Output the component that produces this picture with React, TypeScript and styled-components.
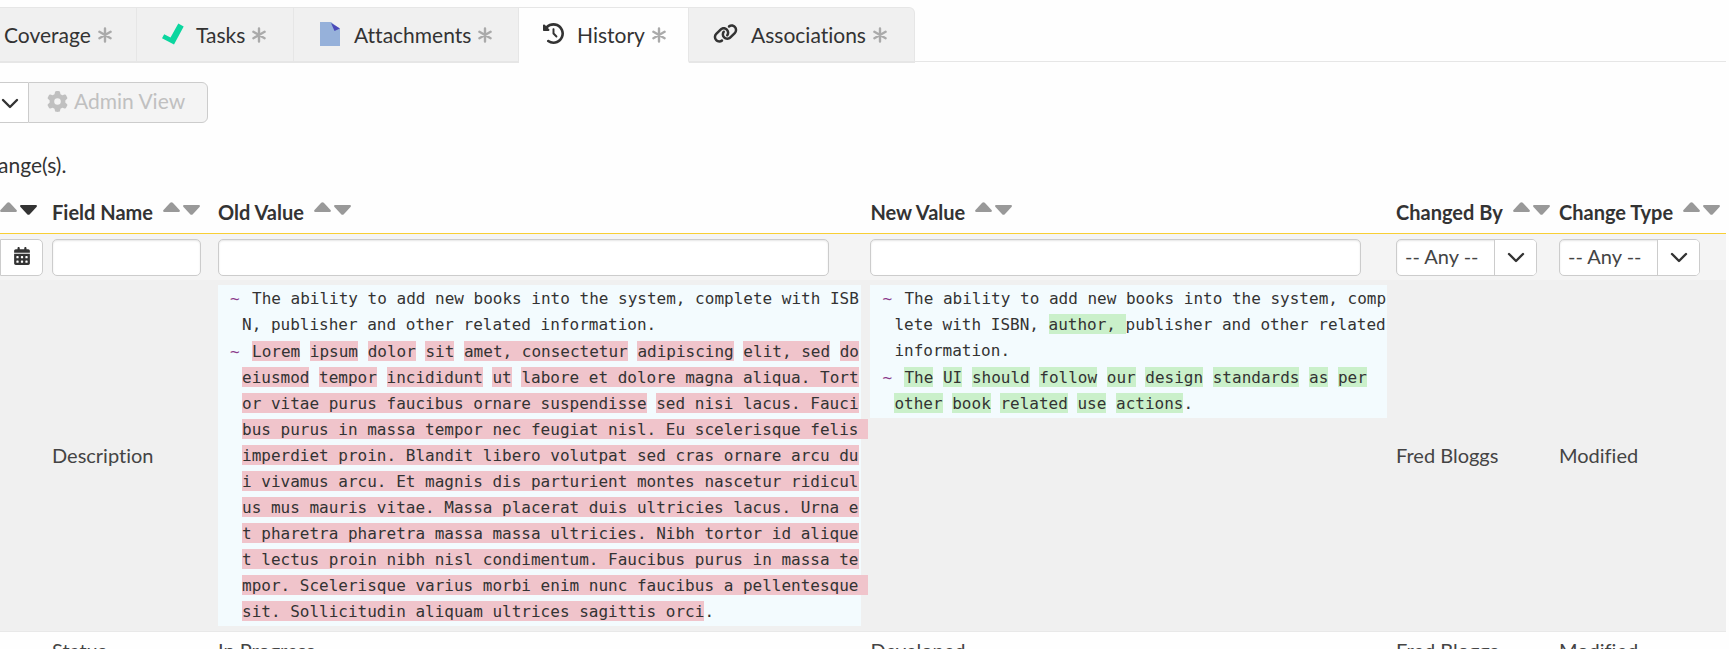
import React from "react";
import styled, { createGlobalStyle, css } from "styled-components";
import { FaCalendarDays, FaClockRotateLeft, FaGear, FaLink } from "react-icons/fa6";

const GlobalStyle = createGlobalStyle`
  *, *::before, *::after { box-sizing: border-box; }
  html { scrollbar-width: none; }
  body {
    margin: 0;
    background: #fefefe;
    color: #333;
    font-family: Lato, "Open Sans", sans-serif;
    font-size: 20px;
    font-variant-ligatures: none;
    line-height: 24px;
    overflow-x: hidden;
  }
`;

const Page = styled.main`
  padding: 7px 3px 0 0;
`;

const TabBar = styled.nav`
  display: flex;
  align-items: flex-start;
  height: 55px;
  border-bottom: 1px solid #e6e6e6;
`;

const Tab = styled.a<{ $active?: boolean; $width: number; $inset?: number }>`
  display: flex;
  flex: none;
  align-items: center;
  width: ${(p) => p.$width}px;
  height: 56px;
  padding-left: ${(p) => p.$inset ?? 24}px;
  border: 1px solid #e6e6e6;
  border-left-width: 0;
  border-bottom: 2px solid ${(p) => (p.$active ? "#fefefe" : "#e6e6e6")};
  background: ${(p) => (p.$active ? "#fefefe" : "#f0f0f0")};
  color: #333;
  font-size: 21px;
  text-decoration: none;
  white-space: nowrap;

  &:last-child { border-top-right-radius: 6px; }
`;

const TabIcon = styled.span<{ $width?: number }>`
  display: flex;
  flex: none;
  width: ${(p) => p.$width ?? 34}px;
  padding-bottom: 2px;
`;

const Star = styled.span`
  display: flex;
  margin-left: 7px;
  color: #aaa;
`;

const Toolbar = styled.div`
  display: flex;
  margin-top: 20px;
`;

const toolButton = css`
  display: flex;
  align-items: center;
  height: 41px;
  border: 1px solid #ccc;
  font: inherit;
  font-size: 21px;
`;

const ViewMenuButton = styled.button`
  ${toolButton}
  width: 28px;
  padding: 0;
  border-width: 1px 0;
  background: #fff;
  color: #333;
`;

const AdminButton = styled.button`
  ${toolButton}
  gap: 6px;
  width: 180px;
  padding: 0 0 3px 18px;
  border-radius: 0 6px 6px 0;
  background: #f4f4f4;
  color: #c0c0c0;
`;

const Summary = styled.p`
  margin: 30px 0 0 -2px;
  font-size: 21px;
`;

const HistoryTable = styled.table`
  width: 100%;
  margin-top: 12px;
  border-collapse: collapse;
  table-layout: fixed;
`;

const HeadCell = styled.th`
  height: 44px;
  padding: 2px 0 0;
  border-bottom: 1px solid #f8cf35;
  font-weight: 700;
  text-align: left;
  white-space: nowrap;
`;

const HeadContent = styled.div`
  display: flex;
  align-items: center;
  gap: 10px;
`;

const SortButtons = styled.span`
  display: flex;
  gap: 3px;
  padding-bottom: 6px;
`;

const SortButton = styled.button<{ $on?: boolean; $down?: boolean }>`
  display: flex;
  padding: ${(p) => (p.$down ? "3px 0 0" : "0")};
  border: 0;
  background: none;
  color: ${(p) => (p.$on ? "#333" : "#999")};
`;

const FilterRow = styled.tr`
  background: #f4f4f4;
`;

const FilterCell = styled.td`
  height: 47px;
  padding: 1px 0 0;
`;

const field = css`
  height: 37px;
  border: 1px solid #ccc;
  border-radius: 5px;
  background: #fff;
  box-shadow: inset 0 1px 2px rgba(0, 0, 0, 0.1);
  font: inherit;
`;

const FilterInput = styled.input<{ $gap: number }>`
  ${field}
  display: block;
  width: calc(100% - ${(p) => p.$gap}px);
  padding: 0 8px;
`;

const DateButton = styled.button`
  ${field}
  display: flex;
  align-items: center;
  justify-content: center;
  width: 43px;
  padding: 0 0 3px;
  border-radius: 0 5px 5px 0;
  box-shadow: none;
  color: #333;
`;

const SelectWrap = styled.div`
  position: relative;
  width: 141px;
`;

const Select = styled.select`
  ${field}
  display: block;
  width: 100%;
  padding: 0 50px 3px 8px;
  appearance: none;
  color: #444;
`;

const SelectArrow = styled.span`
  position: absolute;
  inset: 1px 1px 1px auto;
  display: flex;
  align-items: center;
  justify-content: center;
  width: 42px;
  border-left: 1px solid #ccc;
  border-radius: 0 4px 4px 0;
  background: #fff;
  pointer-events: none;
`;

const Row = styled.tr<{ $shaded?: boolean }>`
  border-bottom: 1px solid #e8e8e8;
  background: ${(p) => (p.$shaded ? "#f0f0f0" : "#fefefe")};
`;

const Cell = styled.td`
  padding: 3px 9px 5px 0;
  color: #444;
  line-height: 30px;
  vertical-align: middle;
`;

const DiffCell = styled(Cell)`
  padding-top: 5px;
  vertical-align: top;
`;

const Diff = styled.div`
  padding: 1px 0;
  background: #f3fbfe;
  color: #333;
  font-family: "DejaVu Sans Mono", "Liberation Mono", monospace;
  font-size: 16px;
  line-height: 26px;
`;

const DiffLine = styled.p`
  margin: 0;
  padding-left: 24px;
  text-indent: -12px;
  white-space: pre-wrap;
  word-break: break-all;

  & + & { margin-top: 1px; }
`;

const Marker = styled.span`
  display: inline-block;
  width: 22px;
  color: #8b3a8b;
  text-indent: 0;
`;

const Removed = styled.del`
  padding: 1px 0 0;
  background: #f0c4cb;
  text-decoration: none;
`;

const Added = styled.ins`
  padding: 1px 0 0;
  background: #caf0ca;
  text-decoration: none;
`;

const Chevron = () => (
  <svg width="20" height="20" viewBox="0 0 20 20" fill="none" stroke="#333" strokeWidth="2.4" strokeLinecap="round" strokeLinejoin="round" aria-hidden="true">
    <path d="M3 7l7 7 7-7" />
  </svg>
);

const Triangle = ({ down }: { down?: boolean }) => (
  <svg width="17" height="10" viewBox="0 0 17 10" fill="currentColor" aria-hidden="true">
    <path d={down ? "M1 0h15q1.600 .4.500 2L9.800 9.300q-1.300 1-2.600 0L.500 2Q-.6.400 1 0z" : "M1 10h15q1.600-.4.500-2L9.800.7q-1.300-1-2.600 0L.500 8Q-.6 9.600 1 10z"} />
  </svg>
);

const CheckIcon = () => (
  <svg width="22" height="22" viewBox="0 0 22 22" aria-hidden="true">
    <path d="M2.200 11.200L8.500 14.500 16.300.4l5.400 3L12 21.400 0 15.300z" fill="#0bd69f" />
  </svg>
);

const DocIcon = () => (
  <svg width="20" height="24" viewBox="0 0 20 24" aria-hidden="true">
    <path d="M0 0h11l9 7v17H0z" fill="#96b1da" />
    <path d="M11 1l9 5.500-5.500 2.500z" fill="#4a48b8" />
  </svg>
);

const Sorts = ({ name, active }: { name: string; active?: boolean }) => (
  <SortButtons>
    <SortButton aria-label={`Sort ${name} ascending`}><Triangle /></SortButton>
    <SortButton $down $on={active} aria-label={`Sort ${name} descending`}><Triangle down /></SortButton>
  </SortButtons>
);

const columns = ["Field Name", "Old Value", "New Value", "Changed By", "Change Type"];

/* Splits a line on "|": every second part is a changed stretch of text. */
const renderParts = (line: string, Mark: React.ElementType) =>
  line.split("|").map((part, i) => (i % 2 ? <Mark key={i}>{part}</Mark> : part));

const oldLines = [
  "The ability to add new books into the system, complete with ISBN, publisher and other related information.",
  "|Lorem| |ipsum| |dolor| |sit| |amet, consectetur| |adipiscing| |elit, sed| |do| |eiusmod| |tempor| |incididunt| |ut| |labore et dolore magna aliqua. Tortor vitae purus faucibus ornare suspendisse| |sed nisi lacus. Faucibus purus in massa tempor nec feugiat nisl. Eu scelerisque felis imperdiet proin. Blandit libero volutpat sed cras ornare arcu dui vivamus arcu. Et magnis dis parturient montes nascetur ridiculus mus mauris vitae. Massa placerat duis ultricies lacus. Urna et pharetra pharetra massa massa ultricies. Nibh tortor id aliquet lectus proin nibh nisl condimentum. Faucibus purus in massa tempor. Scelerisque varius morbi enim nunc faucibus a pellentesque sit. Sollicitudin aliquam ultrices sagittis orci|.",
];

const newLines = [
  "The ability to add new books into the system, complete with ISBN, |author, |publisher and other related information.",
  "|The| |UI| |should| |follow| |our| |design| |standards| |as| |per|\n|other| |book| |related| |use| |actions|.",
];

const DiffText = ({ lines, mark }: { lines: string[]; mark: React.ElementType }) => (
  <Diff>
    {lines.map((line) => (
      <DiffLine key={line}><Marker>~</Marker>{renderParts(line, mark)}</DiffLine>
    ))}
  </Diff>
);

const AnySelect = ({ label }: { label: string }) => (
  <SelectWrap>
    <Select aria-label={label}><option>-- Any --</option></Select>
    <SelectArrow><Chevron /></SelectArrow>
  </SelectWrap>
);

const TabStar = () => (
  <Star>
    <svg width="14" height="16" viewBox="0 0 14 16" fill="none" stroke="currentColor" strokeWidth="2.4" strokeLinecap="round" aria-hidden="true">
      <path d="M7 1.500v13M1.400 4.800l11.200 6.400M12.600 4.800L1.400 11.200" />
    </svg>
  </Star>
);

export default function App() {
  return (
    <>
      <GlobalStyle />
      <Page>
        <TabBar>
          <Tab href="#coverage" $width={137} $inset={4}>Coverage<TabStar /></Tab>
          <Tab href="#tasks" $width={157} $inset={25}><TabIcon><CheckIcon /></TabIcon>Tasks<TabStar /></Tab>
          <Tab href="#attachments" $width={225} $inset={26}><TabIcon><DocIcon /></TabIcon>Attachments<TabStar /></Tab>
          <Tab href="#history" $active $width={170}><TabIcon><FaClockRotateLeft size={21} /></TabIcon>History<TabStar /></Tab>
          <Tab href="#associations" $width={226}><TabIcon $width={38}><FaLink size={25} /></TabIcon>Associations<TabStar /></Tab>
        </TabBar>
        <Toolbar>
          <ViewMenuButton aria-label="Choose view"><Chevron /></ViewMenuButton>
          <AdminButton disabled><FaGear size={21} />Admin View</AdminButton>
        </Toolbar>
        <Summary>ange(s).</Summary>
        <HistoryTable>
          <colgroup>
            <col style={{ width: 52 }} />
            <col style={{ width: 166 }} />
            <col style={{ width: "37.8%" }} />
            <col />
            <col style={{ width: 163 }} />
            <col style={{ width: 167 }} />
          </colgroup>
          <thead>
            <tr>
              <HeadCell><HeadContent><Sorts name="date" active /></HeadContent></HeadCell>
              {columns.map((name) => (
                <HeadCell key={name}><HeadContent>{name}<Sorts name={name} /></HeadContent></HeadCell>
              ))}
            </tr>
          </thead>
          <tbody>
            <FilterRow>
              <FilterCell><DateButton aria-label="Pick a date"><FaCalendarDays size={18} /></DateButton></FilterCell>
              <FilterCell><FilterInput $gap={17} aria-label="Filter field name" /></FilterCell>
              <FilterCell><FilterInput $gap={41} aria-label="Filter old value" /></FilterCell>
              <FilterCell><FilterInput $gap={35} aria-label="Filter new value" /></FilterCell>
              <FilterCell><AnySelect label="Changed by" /></FilterCell>
              <FilterCell><AnySelect label="Change type" /></FilterCell>
            </FilterRow>
            <Row $shaded>
              <Cell />
              <Cell>Description</Cell>
              <DiffCell><DiffText lines={oldLines} mark={Removed} /></DiffCell>
              <DiffCell><DiffText lines={newLines} mark={Added} /></DiffCell>
              <Cell>Fred Bloggs</Cell>
              <Cell>Modified</Cell>
            </Row>
            <Row>
              <Cell />
              <Cell>Status</Cell>
              <Cell>In Progress</Cell>
              <Cell>Developed</Cell>
              <Cell>Fred Bloggs</Cell>
              <Cell>Modified</Cell>
            </Row>
          </tbody>
        </HistoryTable>
      </Page>
    </>
  );
}
